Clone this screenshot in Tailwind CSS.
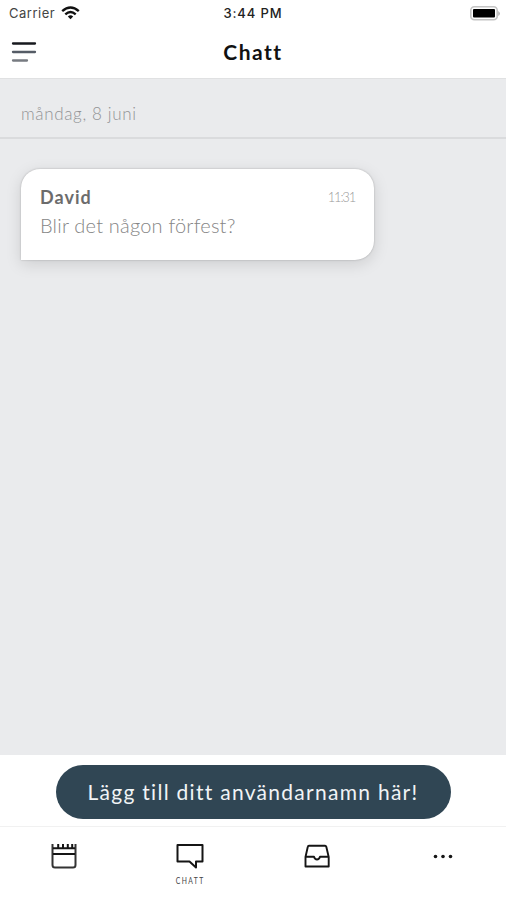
<!DOCTYPE html>
<html lang="sv">
<head>
<meta charset="utf-8">
<title>Chatt</title>
<script src="https://cdn.jsdelivr.net/npm/@tailwindcss/browser@4"></script>
</head>
<body class="w-[506px] h-[900px] overflow-hidden bg-white font-[Lato,sans-serif]">
<div class="flex flex-col h-full whitespace-nowrap">
  <header class="h-[78px] shrink-0 bg-white">
    <div class="grid grid-cols-3 h-[26px] items-center font-[Inter,sans-serif] text-[13px] leading-[26px]">
      <div class="flex items-center pl-[9px] gap-[6px] text-[#444]">
        <span class="tracking-[0.5px]">Carrier</span>
        <svg class="w-[19px] h-[14px]" viewBox="0 0 19 14" fill="none" stroke="#111" stroke-width="2.4"><path d="M1.2 5.2Q9.5-2.2 17.8 5.2M4.3 8.3Q9.5 3.8 14.7 8.3"/><path d="M6.8 10.5Q9.5 8.2 12.2 10.5L9.5 13.2Z" fill="#111" stroke="none"/></svg>
      </div>
      <div class="text-center font-medium text-[#222] tracking-[0.9px]">3:44 PM</div>
      <svg class="w-[30px] h-[15px] justify-self-end mr-[6px]" viewBox="0 0 30 15"><rect x=".8" y=".8" width="26.4" height="13" rx="3.5" fill="#fff" stroke="#c4c4c4" stroke-width="1.6"/><rect x="3" y="3" width="22" height="8.5" rx="1" fill="#000"/><path d="M28.3 5v5q1.5-1 1.5-2.5t-1.5-2.5" fill="#aaa"/></svg>
    </div>
    <div class="grid grid-cols-3 h-[52px] items-center">
      <svg class="ml-[11px] w-[26px] h-[22px]" viewBox="0 0 26 22" fill="none" stroke-width="2.3" stroke-linecap="round"><path d="M2 2.5h22" stroke="#17191e"/><path d="M2 11h22" stroke="#555c66"/><path d="M2 19.5h14" stroke="#777b81"/></svg>
      <h1 class="text-center text-[21px] font-bold tracking-[1.5px] text-[#111] leading-[50px]">Chatt</h1>
    </div>
  </header>
  <main class="flex-1 bg-[#eaebed] border-t border-[#e0e1e2]">
    <div class="h-[60px] border-b-2 border-[#dadbdd] pl-[21px] pt-[23px] text-[17px] leading-[24px] font-light text-[#929395] tracking-[0.65px]"><span>måndag, 8 juni</span></div>
    <section class="ml-[21px] mt-[30px] w-[353px] h-[91px] rounded-[19px] rounded-bl-none bg-white shadow-[0_0_2px_rgba(0,0,0,0.25),0_4px_16px_rgba(0,0,0,0.13)] px-[19px] pt-[16px]">
      <div class="flex justify-between h-[24px] items-center">
        <span class="text-[18px] font-bold tracking-[1px] text-[#6c6c6c]">David</span>
        <time class="text-[13px] font-light text-[#999] tracking-[-1.2px] pt-[1px]">11:31</time>
      </div>
      <p class="mt-[3px] text-[20px] leading-[26px] font-light text-[#858585] tracking-[0.2px]"><span>Blir det någon förfest?</span></p>
    </section>
  </main>
  <div class="h-[72px] shrink-0 bg-white flex justify-center pt-[10px] border-b border-[#f1f1f1]">
    <button class="w-[395px] h-[54px] rounded-full bg-[#304654] text-[#f1f4f6] text-[21px] tracking-[1.28px]"><span>Lägg till ditt användarnamn här!</span></button>
  </div>
  <nav class="h-[73px] shrink-0 grid grid-cols-4 bg-white text-[#151515] pt-[16px]">
    <div class="flex justify-center pl-[2px]"><svg class="w-[26px] h-[26px]" viewBox="0 0 26 26" fill="none" stroke="currentColor" stroke-width="2"><path d="M1.5 1v21q0 2.5 2.5 2.5h18q2.5 0 2.5-2.5V1" stroke="#333"/><path d="M2 5.2h22M2 11h22M7.2 1v4M12 1v4M16.8 1v4M21.2 1v4"/></svg></div>
    <div class="flex flex-col items-center"><svg class="w-[28px] h-[27px]" viewBox="0 0 28 27" fill="none" stroke="currentColor" stroke-width="2" stroke-linejoin="round"><path d="M1.5 2h25v16.5h-6.5v6l-6.5-6h-12Z"/></svg><span class="mt-[6px] text-[9px] leading-[10px] tracking-[1.9px] scale-x-75 text-[#444]">CHATT</span></div>
    <div class="flex justify-center pl-[2px]"><svg class="w-[26px] h-[26px]" viewBox="0 0 26 26" fill="none" stroke="currentColor" stroke-width="1.9" stroke-linejoin="round"><path d="M5 2.8h16q1 0 1.3 1L24.7 14v9.5H1.5V14L3.8 3.8q.2-1 1.2-1ZM1.5 13.8H10q.8 2.7 3 2.7t3-2.7h8.5"/></svg></div>
    <div class="flex justify-center"><svg class="w-[22px] h-[26px]" viewBox="0 0 22 26" fill="currentColor"><circle cx="3.5" cy="13.5" r="1.8"/><circle cx="11" cy="13.5" r="1.8"/><circle cx="18.5" cy="13.5" r="1.8"/></svg></div>
  </nav>
</div>
</body>
</html>
